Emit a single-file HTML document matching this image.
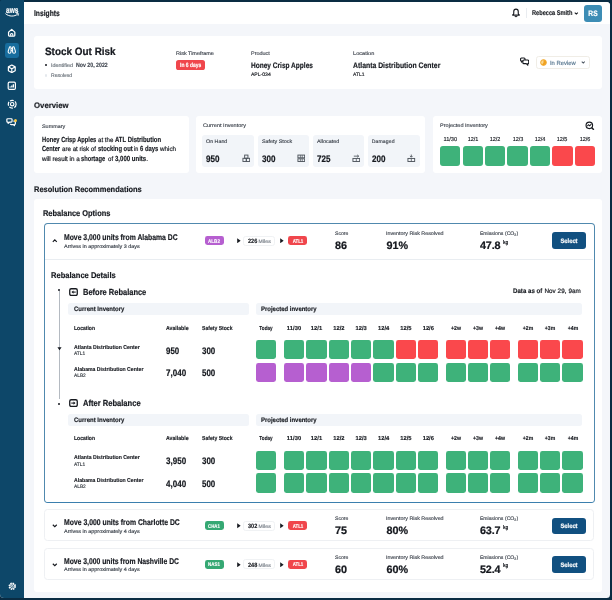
<!DOCTYPE html>
<html lang="en"><head><meta charset="utf-8"><title>Insights - Stock Out Risk</title>
<style>
html,body{margin:0;padding:0;}
body{width:612px;height:600px;overflow:hidden;background:#0a2c43;position:relative;font-family:"Liberation Sans",sans-serif;text-rendering:geometricPrecision;}
#app{position:absolute;left:0;top:0;width:612px;height:600px;transform:translateZ(0);will-change:transform;}
.b{position:absolute;display:block;}
.t{position:absolute;white-space:nowrap;}
b{font-weight:700;}
</style></head><body><div id="app">
<div class="b" style="left:0px;top:1.5px;width:609.60px;height:596.00px;background:#f4f6fa;border-radius:0px;border-radius:0 3.5px 3.5px 4px;"></div>
<div class="b" style="left:0px;top:0px;width:24.00px;height:597.50px;background:#0d4769;border-radius:0px;border-radius:1.5px 0 0 4px;"></div>
<div class="b" style="left:24px;top:1.5px;width:585.60px;height:22.60px;background:#fff;border-radius:0px;border-radius:0 3.5px 0 0;"></div>
<div class="t" style="left:5.8px;top:4.88px;font-size:8.8px;line-height:11.44px;font-weight:700;color:#fff;-webkit-text-stroke:0.194px #fff;transform:scaleX(0.7452);transform-origin:0 50%;">aws</div>
<svg class="b" style="left:5.2px;top:13.4px" width="14.4" height="4.4" viewBox="0 0 28.8 8.8" fill="none"><path d="M1.4 1.8 C8 7.6 19 7.6 25 2.6" stroke="#fff" stroke-width="2" stroke-linecap="round"/><path d="M23.4 0.9 L27.4 1.3 L26.2 5.2" stroke="#fff" stroke-width="1.5" stroke-linecap="round"/></svg>
<svg class="b" style="left:7.30px;top:27.90px;" width="9.4" height="9.4" viewBox="0 0 24 24" fill="none"><path d="M4 10.5 L12 3.5 L20 10.5 V18.5 Q20 20.5 18 20.5 H6 Q4 20.5 4 18.5 Z" stroke="#fff" stroke-width="3.2" stroke-linejoin="round"/><path d="M9.3 20 V15.5 Q12 12.5 14.7 15.5 V20" stroke="#fff" stroke-width="2.9"/></svg>
<div class="b" style="left:4.6px;top:42.6px;width:14.90px;height:15.40px;background:#176d9e;border-radius:2.4px;"></div>
<svg class="b" style="left:7.20px;top:45.40px;" width="9.6" height="9.6" viewBox="0 0 24 24" fill="none"><path d="M9.5 5 Q7 3.5 6 6 L3 15.5 Q2.5 20.5 6.5 20.5 Q10 20.5 10 17 V6 Z" stroke="#fff" stroke-width="2.7" stroke-linejoin="round"/><path d="M14.5 5 Q17 3.5 18 6 L21 15.5 Q21.5 20.5 17.5 20.5 Q14 20.5 14 17 V6 Z" stroke="#fff" stroke-width="2.7" stroke-linejoin="round"/><path d="M10 9 H14 M10 14 H14" stroke="#fff" stroke-width="2.4"/></svg>
<svg class="b" style="left:7.20px;top:63.80px;" width="9.6" height="9.6" viewBox="0 0 24 24" fill="none"><path d="M12 2.5 L20.5 7.2 V16.8 L12 21.5 L3.5 16.8 V7.2 Z" stroke="#fff" stroke-width="3.0" stroke-linejoin="round"/><path d="M3.8 7.4 L12 12 L20.2 7.4 M12 12 V21" stroke="#fff" stroke-width="2.7"/></svg>
<svg class="b" style="left:7.20px;top:81.20px;" width="9.6" height="9.6" viewBox="0 0 24 24" fill="none"><rect x="3" y="3" width="18" height="18" rx="3" stroke="#fff" stroke-width="3.0"/><path d="M8 16.5 V14 M12 16.5 V11 M16 16.5 V8" stroke="#fff" stroke-width="3.2"/></svg>
<svg class="b" style="left:6.80px;top:99.30px;" width="10.4" height="10.4" viewBox="0 0 24 24" fill="none"><circle cx="12" cy="12" r="9" stroke="#fff" stroke-width="2.8" stroke-dasharray="9 3"/><circle cx="12" cy="12" r="4" stroke="#fff" stroke-width="2.7"/></svg>
<svg class="b" style="left:6.40px;top:117.10px;" width="10.4" height="10.4" viewBox="0 0 24 24" fill="none"><path d="M4 4 H12 Q14 4 14 6 V10 Q14 12 12 12 H8 L5 14.5 V12 H4 Q2 12 2 10 V6 Q2 4 4 4 Z" stroke="#fff" stroke-width="2.8" stroke-linejoin="round"/><path d="M17 9.5 H19.5 Q21.5 9.5 21.5 11.5 V15.5 Q21.5 17.5 19.5 17.5 V20 L16.5 17.5 H12 Q10 17.5 10 15.5" stroke="#fff" stroke-width="2.8" stroke-linejoin="round"/></svg>
<div class="b" style="left:13.9px;top:119.1px;width:3.00px;height:3.00px;background:#f5c542;border-radius:2px;"></div>
<svg class="b" style="left:7.70px;top:581.90px;" width="8.6" height="8.6" viewBox="0 0 24 24" fill="none"><circle cx="12" cy="12" r="8.6" stroke="#fff" stroke-width="3.7" stroke-dasharray="4.2 2.55"/><circle cx="12" cy="12" r="6.5" stroke="#fff" stroke-width="2.4"/><circle cx="12" cy="12" r="2.6" stroke="#fff" stroke-width="2.4"/></svg>
<div class="t" style="left:34.3px;top:7.61px;font-size:8.3px;line-height:10.79px;font-weight:700;color:#16191f;-webkit-text-stroke:0.183px #16191f;transform:scaleX(0.8079);transform-origin:0 50%;">Insights</div>
<svg class="b" style="left:510.80px;top:7.50px;" width="10" height="10" viewBox="0 0 24 24" fill="none"><path d="M12 2.6 Q6.6 2.6 6.6 8.6 V13 Q6.6 15 4.2 16.4 V17.2 H19.8 V16.4 Q17.4 15 17.4 13 V8.6 Q17.4 2.6 12 2.6 Z" stroke="#16191f" stroke-width="2.7" stroke-linejoin="round"/><path d="M9.2 19.2 Q12 22.8 14.8 19.2" stroke="#16191f" stroke-width="2.5"/></svg>
<div class="b" style="left:526px;top:7.6px;width:0.60px;height:10.20px;background:#e9ecf0;border-radius:0px;"></div>
<div class="t" style="left:531.6px;top:10.15px;font-size:6.9px;line-height:8.97px;font-weight:700;color:#16191f;-webkit-text-stroke:0.152px #16191f;transform:scaleX(0.8177);transform-origin:0 50%;">Rebecca Smith</div>
<svg class="b" style="left:574.40px;top:11.00px;" width="4.6" height="4.6" viewBox="0 0 24 24" fill="none"><path d="M4 8 L12 16 L20 8" stroke="#16191f" stroke-width="5.4"/></svg>
<div class="b" style="left:584.4px;top:4.6px;width:17.20px;height:17.10px;background:#3d8db5;border-radius:3px;"></div>
<div class="t" style="left:592.8px;top:8.92px;font-size:7.8px;line-height:10.14px;font-weight:700;color:#fff;-webkit-text-stroke:0.172px #fff;transform:translateX(-50%) scaleX(0.8576);transform-origin:50% 50%;">RS</div>
<div class="b" style="left:34.4px;top:36.3px;width:567.20px;height:52.50px;background:#fff;border-radius:3px;"></div>
<div class="t" style="left:44.8px;top:45.67px;font-size:10.7px;line-height:13.91px;font-weight:700;color:#16191f;-webkit-text-stroke:0.235px #16191f;transform:scaleX(0.9286);transform-origin:0 50%;">Stock Out Risk</div>
<div class="b" style="left:44.9px;top:63.5px;width:2.20px;height:2.20px;background:#16191f;border-radius:1.1px;"></div>
<div class="t" style="left:50.8px;top:62.96px;font-size:5.2px;line-height:6.76px;font-weight:400;color:#687078;-webkit-text-stroke:0.156px #687078;transform:scaleX(1.0445);transform-origin:0 50%;">Identified</div>
<div class="t" style="left:76.2px;top:61.95px;font-size:6.2px;line-height:8.06px;font-weight:700;color:#414750;-webkit-text-stroke:0.136px #414750;transform:scaleX(0.8453);transform-origin:0 50%;">Nov 20, 2022</div>
<div class="b" style="left:44.9px;top:74.4px;width:2.20px;height:2.20px;background:#e4e8ed;border-radius:1.1px;"></div>
<div class="t" style="left:50.8px;top:73.48px;font-size:5.2px;line-height:6.76px;font-weight:400;color:#687078;-webkit-text-stroke:0.156px #687078;transform:scaleX(0.9704);transform-origin:0 50%;">Resolved</div>
<div class="t" style="left:176.2px;top:51.08px;font-size:5.2px;line-height:6.76px;font-weight:400;color:#414750;-webkit-text-stroke:0.156px #414750;transform:scaleX(1.0519);transform-origin:0 50%;">Risk Timeframe</div>
<div class="b" style="left:176.2px;top:60.4px;width:28.50px;height:9.20px;background:#f0464c;border-radius:2.6px;"></div>
<div class="t" style="left:179.8px;top:62.39px;font-size:6.2px;line-height:8.06px;font-weight:700;color:#fff;-webkit-text-stroke:0.136px #fff;transform:scaleX(0.8005);transform-origin:0 50%;">In 6 days</div>
<div class="t" style="left:250.9px;top:51.08px;font-size:5.2px;line-height:6.76px;font-weight:400;color:#414750;-webkit-text-stroke:0.156px #414750;transform:scaleX(1.0564);transform-origin:0 50%;">Product</div>
<div class="t" style="left:250.9px;top:61.22px;font-size:8.0px;line-height:10.4px;font-weight:700;color:#16191f;-webkit-text-stroke:0.176px #16191f;transform:scaleX(0.8175);transform-origin:0 50%;">Honey Crisp Apples</div>
<div class="t" style="left:250.9px;top:71.52px;font-size:5.1px;line-height:6.63px;font-weight:400;color:#16191f;letter-spacing:0.012px;-webkit-text-stroke:0.153px #16191f;">APL-034</div>
<div class="t" style="left:352.8px;top:51.08px;font-size:5.2px;line-height:6.76px;font-weight:400;color:#414750;-webkit-text-stroke:0.156px #414750;transform:scaleX(1.0854);transform-origin:0 50%;">Location</div>
<div class="t" style="left:352.8px;top:61.22px;font-size:8.0px;line-height:10.4px;font-weight:700;color:#16191f;-webkit-text-stroke:0.176px #16191f;transform:scaleX(0.8577);transform-origin:0 50%;">Atlanta Distribution Center</div>
<div class="t" style="left:352.8px;top:71.52px;font-size:5.1px;line-height:6.63px;font-weight:400;color:#16191f;-webkit-text-stroke:0.153px #16191f;transform:scaleX(0.9748);transform-origin:0 50%;">ATL1</div>
<svg class="b" style="left:519.60px;top:57.30px;" width="9.6" height="9.6" viewBox="0 0 24 24" fill="none"><path d="M3.6 2.6 H10.2 Q12.6 2.6 12.6 5 V7.6 Q12.6 10 10.2 10 H6.8 L4 12.6 V10 H3.6 Q1.4 10 1.4 7.6 V5 Q1.4 2.6 3.6 2.6 Z" stroke="#16191f" stroke-width="2.8" stroke-linejoin="round" fill="#fff"/><path d="M9.6 7.6 H19.2 Q21.8 7.6 21.8 10 V14.2 Q21.8 16.6 19.4 16.6 V20.6 L15.6 16.6 H9.6 Q7.2 16.6 7.2 14.2 V10 Q7.2 7.6 9.6 7.6 Z" stroke="#16191f" stroke-width="2.8" stroke-linejoin="round" fill="#fff"/></svg>
<div class="b" style="left:536.2px;top:55.9px;width:53.70px;height:13.40px;background:#fff;border-radius:2.6px;border:0.7px solid #f0ede6;box-sizing:border-box;"></div>
<svg class="b" style="left:539.60px;top:59.00px;" width="7.0" height="7.0" viewBox="0 0 24 24" fill="none"><circle cx="12" cy="12" r="9.8" fill="#fbd88f" stroke="#f0a11f" stroke-width="3.4"/><path d="M12 12 V3 A9 9 0 0 1 21 12 A9 9 0 0 1 7 19.5 Z" fill="#f0a11f"/></svg>
<div class="t" style="left:550.1px;top:60.65px;font-size:6.0px;line-height:7.8px;font-weight:400;color:#5d7b93;-webkit-text-stroke:0.18px #5d7b93;transform:scaleX(0.9718);transform-origin:0 50%;">In Review</div>
<svg class="b" style="left:580.90px;top:60.40px;" width="4.6" height="4.6" viewBox="0 0 24 24" fill="none"><path d="M4 8 L12 16 L20 8" stroke="#4b5560" stroke-width="5.4"/></svg>
<div class="t" style="left:34.1px;top:100.66px;font-size:8.0px;line-height:10.4px;font-weight:700;color:#16191f;-webkit-text-stroke:0.176px #16191f;transform:scaleX(0.9725);transform-origin:0 50%;">Overview</div>
<div class="b" style="left:34.4px;top:115.5px;width:154.60px;height:57.30px;background:#fff;border-radius:3px;"></div>
<div class="t" style="left:41.5px;top:123.92px;font-size:5.1px;line-height:6.63px;font-weight:400;color:#414750;-webkit-text-stroke:0.153px #414750;transform:scaleX(1.0644);transform-origin:0 50%;">Summary</div>
<div class="t" style="left:41.5px;top:134.54px;font-size:7.4px;line-height:9.62px;font-weight:700;color:#16191f;-webkit-text-stroke:0.163px #16191f;transform:scaleX(0.7762);transform-origin:0 50%;">Honey Crisp Apples</div>
<div class="t" style="left:97.9px;top:137.45px;font-size:6.5px;line-height:8.45px;font-weight:400;color:#16191f;-webkit-text-stroke:0.195px #16191f;transform:scaleX(0.9406);transform-origin:0 50%;">at the</div>
<div class="t" style="left:115.2px;top:134.54px;font-size:7.4px;line-height:9.62px;font-weight:700;color:#16191f;-webkit-text-stroke:0.163px #16191f;transform:scaleX(0.8059);transform-origin:0 50%;">ATL Distribution</div>
<div class="t" style="left:41.5px;top:143.54px;font-size:7.4px;line-height:9.62px;font-weight:700;color:#16191f;-webkit-text-stroke:0.163px #16191f;transform:scaleX(0.7728);transform-origin:0 50%;">Center</div>
<div class="t" style="left:61.5px;top:146.45px;font-size:6.5px;line-height:8.45px;font-weight:400;color:#16191f;-webkit-text-stroke:0.195px #16191f;transform:scaleX(0.9506);transform-origin:0 50%;">are at risk of</div>
<div class="t" style="left:97.5px;top:143.54px;font-size:7.4px;line-height:9.62px;font-weight:700;color:#16191f;-webkit-text-stroke:0.163px #16191f;transform:scaleX(0.7898);transform-origin:0 50%;">stocking out</div>
<div class="t" style="left:134.1px;top:146.45px;font-size:6.5px;line-height:8.45px;font-weight:400;color:#16191f;-webkit-text-stroke:0.195px #16191f;transform:scaleX(0.8494);transform-origin:0 50%;">in</div>
<div class="t" style="left:140px;top:143.54px;font-size:7.4px;line-height:9.62px;font-weight:700;color:#16191f;-webkit-text-stroke:0.163px #16191f;transform:scaleX(0.7951);transform-origin:0 50%;">6 days</div>
<div class="t" style="left:160px;top:146.45px;font-size:6.5px;line-height:8.45px;font-weight:400;color:#16191f;-webkit-text-stroke:0.195px #16191f;transform:scaleX(0.9624);transform-origin:0 50%;">which</div>
<div class="t" style="left:41.5px;top:156.45px;font-size:6.5px;line-height:8.45px;font-weight:400;color:#16191f;-webkit-text-stroke:0.195px #16191f;transform:scaleX(0.9663);transform-origin:0 50%;">will result in a</div>
<div class="t" style="left:81.1px;top:153.54px;font-size:7.4px;line-height:9.62px;font-weight:700;color:#16191f;-webkit-text-stroke:0.163px #16191f;transform:scaleX(0.772);transform-origin:0 50%;">shortage</div>
<div class="t" style="left:107.6px;top:156.45px;font-size:6.5px;line-height:8.45px;font-weight:400;color:#16191f;-webkit-text-stroke:0.195px #16191f;transform:scaleX(0.9406);transform-origin:0 50%;">of</div>
<div class="t" style="left:115px;top:153.54px;font-size:7.4px;line-height:9.62px;font-weight:700;color:#16191f;-webkit-text-stroke:0.163px #16191f;transform:scaleX(0.8167);transform-origin:0 50%;">3,000 units</div>
<div class="t" style="left:146.2px;top:156.45px;font-size:6.5px;line-height:8.45px;font-weight:400;color:#16191f;-webkit-text-stroke:0.195px #16191f;">.</div>
<div class="b" style="left:195.8px;top:115.5px;width:229.60px;height:57.30px;background:#fff;border-radius:3px;"></div>
<div class="t" style="left:203px;top:123.11px;font-size:5.1px;line-height:6.63px;font-weight:400;color:#414750;-webkit-text-stroke:0.153px #414750;transform:scaleX(1.0925);transform-origin:0 50%;">Current Inventory</div>
<div class="b" style="left:202.4px;top:134.6px;width:51.70px;height:32.30px;background:#f2f5f9;border-radius:3px;"></div>
<div class="t" style="left:206.20000000000002px;top:138.52px;font-size:5.1px;line-height:6.63px;font-weight:400;color:#414750;-webkit-text-stroke:0.153px #414750;transform:scaleX(1.0446);transform-origin:0 50%;">On Hand</div>
<div class="t" style="left:206.20000000000002px;top:153.26px;font-size:9.4px;line-height:12.22px;font-weight:700;color:#16191f;-webkit-text-stroke:0.207px #16191f;transform:scaleX(0.8623);transform-origin:0 50%;">950</div>
<svg class="b" style="left:241.50px;top:153.80px;" width="8.6" height="8.6" viewBox="0 0 24 24" fill="none"><rect x="7.4" y="3" width="9.2" height="9" stroke="#4d545c" stroke-width="2.6"/><rect x="2.6" y="12" width="9.4" height="9" stroke="#4d545c" stroke-width="2.6"/><rect x="12" y="12" width="9.4" height="9" stroke="#4d545c" stroke-width="2.6"/></svg>
<div class="b" style="left:257.8px;top:134.6px;width:51.40px;height:32.30px;background:#f2f5f9;border-radius:3px;"></div>
<div class="t" style="left:261.6px;top:138.52px;font-size:5.1px;line-height:6.63px;font-weight:400;color:#414750;-webkit-text-stroke:0.153px #414750;transform:scaleX(1.0556);transform-origin:0 50%;">Safety Stock</div>
<div class="t" style="left:261.6px;top:153.26px;font-size:9.4px;line-height:12.22px;font-weight:700;color:#16191f;-webkit-text-stroke:0.207px #16191f;transform:scaleX(0.8623);transform-origin:0 50%;">300</div>
<svg class="b" style="left:296.60px;top:153.80px;" width="8.6" height="8.6" viewBox="0 0 24 24" fill="none"><rect x="2.6" y="3" width="18.8" height="7.6" stroke="#4d545c" stroke-width="2.6"/><rect x="2.6" y="13.4" width="18.8" height="7.6" stroke="#4d545c" stroke-width="2.6"/><path d="M9.4 3 V10.6 M14.6 3 V10.6 M9.4 13.4 V21 M14.6 13.4 V21" stroke="#4d545c" stroke-width="2"/></svg>
<div class="b" style="left:313px;top:134.6px;width:51.40px;height:32.30px;background:#f2f5f9;border-radius:3px;"></div>
<div class="t" style="left:316.8px;top:138.52px;font-size:5.1px;line-height:6.63px;font-weight:400;color:#414750;-webkit-text-stroke:0.153px #414750;transform:scaleX(1.0635);transform-origin:0 50%;">Allocated</div>
<div class="t" style="left:316.8px;top:153.26px;font-size:9.4px;line-height:12.22px;font-weight:700;color:#16191f;-webkit-text-stroke:0.207px #16191f;transform:scaleX(0.8623);transform-origin:0 50%;">725</div>
<svg class="b" style="left:351.80px;top:153.80px;" width="8.6" height="8.6" viewBox="0 0 24 24" fill="none"><rect x="2.6" y="12.4" width="18.8" height="8.6" stroke="#4d545c" stroke-width="2.6"/><path d="M5 6 H18.5 M14.6 2.6 L18.6 6 L14.6 9.4" stroke="#4d545c" stroke-width="2.4"/><path d="M12 12.4 V21" stroke="#4d545c" stroke-width="2.2"/></svg>
<div class="b" style="left:368px;top:134.6px;width:51.60px;height:32.30px;background:#f2f5f9;border-radius:3px;"></div>
<div class="t" style="left:371.8px;top:138.52px;font-size:5.1px;line-height:6.63px;font-weight:400;color:#414750;letter-spacing:0.101px;-webkit-text-stroke:0.153px #414750;">Damaged</div>
<div class="t" style="left:371.8px;top:153.26px;font-size:9.4px;line-height:12.22px;font-weight:700;color:#16191f;-webkit-text-stroke:0.207px #16191f;transform:scaleX(0.8623);transform-origin:0 50%;">200</div>
<svg class="b" style="left:407.00px;top:153.80px;" width="8.6" height="8.6" viewBox="0 0 24 24" fill="none"><rect x="2.6" y="12.4" width="18.8" height="8.6" stroke="#4d545c" stroke-width="2.6"/><path d="M12 1.6 V8.6 M8.4 5.4 L12 9 L15.6 5.4" stroke="#4d545c" stroke-width="2.4"/><path d="M12 12.4 V21" stroke="#4d545c" stroke-width="2.2"/></svg>
<div class="b" style="left:433.1px;top:115.5px;width:168.50px;height:57.30px;background:#fff;border-radius:3px;"></div>
<div class="t" style="left:440.1px;top:123.32px;font-size:5.1px;line-height:6.63px;font-weight:400;color:#414750;-webkit-text-stroke:0.153px #414750;transform:scaleX(1.0913);transform-origin:0 50%;">Projected Inventory</div>
<svg class="b" style="left:585.10px;top:120.70px;" width="9.8" height="9.8" viewBox="0 0 24 24" fill="none"><circle cx="10.6" cy="10.6" r="8" stroke="#16191f" stroke-width="2.8"/><path d="M16.6 16.6 L21.6 21.6" stroke="#16191f" stroke-width="3.4"/><path d="M5.6 12.4 L8.8 9.2 L11.4 11.8 L15.6 7.6" stroke="#16191f" stroke-width="2.5"/></svg>
<div class="b" style="left:440.1px;top:146.1px;width:20.40px;height:20.20px;background:#3eb27a;border-radius:2.9px;"></div>
<div class="t" style="left:450.3px;top:136.67px;font-size:5.7px;line-height:7.41px;font-weight:400;color:#16191f;letter-spacing:-0.028px;transform:translateX(-50%) scaleX(1);transform-origin:50% 50%;-webkit-text-stroke:0.13px #16191f;">11/30</div>
<div class="b" style="left:462.53px;top:146.1px;width:20.40px;height:20.20px;background:#3eb27a;border-radius:2.9px;"></div>
<div class="t" style="left:472.73px;top:136.67px;font-size:5.7px;line-height:7.41px;font-weight:400;color:#16191f;transform:translateX(-50%) scaleX(0.9659);transform-origin:50% 50%;-webkit-text-stroke:0.13px #16191f;">12/1</div>
<div class="b" style="left:484.96px;top:146.1px;width:20.40px;height:20.20px;background:#3eb27a;border-radius:2.9px;"></div>
<div class="t" style="left:495.16px;top:136.67px;font-size:5.7px;line-height:7.41px;font-weight:400;color:#16191f;transform:translateX(-50%) scaleX(0.9659);transform-origin:50% 50%;-webkit-text-stroke:0.13px #16191f;">12/2</div>
<div class="b" style="left:507.39px;top:146.1px;width:20.40px;height:20.20px;background:#3eb27a;border-radius:2.9px;"></div>
<div class="t" style="left:517.59px;top:136.67px;font-size:5.7px;line-height:7.41px;font-weight:400;color:#16191f;transform:translateX(-50%) scaleX(0.9659);transform-origin:50% 50%;-webkit-text-stroke:0.13px #16191f;">12/3</div>
<div class="b" style="left:529.82px;top:146.1px;width:20.40px;height:20.20px;background:#3eb27a;border-radius:2.9px;"></div>
<div class="t" style="left:540.0200000000001px;top:136.67px;font-size:5.7px;line-height:7.41px;font-weight:400;color:#16191f;transform:translateX(-50%) scaleX(0.9659);transform-origin:50% 50%;-webkit-text-stroke:0.13px #16191f;">12/4</div>
<div class="b" style="left:552.25px;top:146.1px;width:20.40px;height:20.20px;background:#fa484c;border-radius:2.9px;"></div>
<div class="t" style="left:562.45px;top:136.67px;font-size:5.7px;line-height:7.41px;font-weight:400;color:#16191f;transform:translateX(-50%) scaleX(0.9659);transform-origin:50% 50%;-webkit-text-stroke:0.13px #16191f;">12/5</div>
<div class="b" style="left:574.68px;top:146.1px;width:20.40px;height:20.20px;background:#fa484c;border-radius:2.9px;"></div>
<div class="t" style="left:584.8800000000001px;top:136.67px;font-size:5.7px;line-height:7.41px;font-weight:400;color:#16191f;transform:translateX(-50%) scaleX(0.9659);transform-origin:50% 50%;-webkit-text-stroke:0.13px #16191f;">12/6</div>
<div class="t" style="left:33.9px;top:184.64px;font-size:8.1px;line-height:10.53px;font-weight:700;color:#16191f;-webkit-text-stroke:0.178px #16191f;transform:scaleX(0.9254);transform-origin:0 50%;">Resolution Recommendations</div>
<div class="b" style="left:34.3px;top:199.3px;width:567.30px;height:392.30px;background:#fff;border-radius:3px;"></div>
<div class="t" style="left:43.1px;top:207.54px;font-size:8.4px;line-height:10.92px;font-weight:700;color:#16191f;-webkit-text-stroke:0.185px #16191f;transform:scaleX(0.8885);transform-origin:0 50%;">Rebalance Options</div>
<div class="b" style="left:44.2px;top:223.3px;width:550.40px;height:280.00px;background:#fff;border-radius:3.8px;border:1.1px solid #5089ae;border-bottom:1.5px solid #3b7fae;box-sizing:border-box;"></div>
<svg class="b" style="left:52.40px;top:238.20px;" width="5.6" height="5.6" viewBox="0 0 24 24" fill="none"><path d="M3.5 16.5 L12 8 L20.5 16.5" stroke="#16191f" stroke-width="4.8"/></svg>
<div class="t" style="left:63.8px;top:231.91px;font-size:8.3px;line-height:10.79px;font-weight:700;color:#16191f;-webkit-text-stroke:0.183px #16191f;transform:scaleX(0.8238);transform-origin:0 50%;">Move 3,000 units from Alabama DC</div>
<div class="t" style="left:64px;top:243.52px;font-size:5.1px;line-height:6.63px;font-weight:400;color:#3b424b;-webkit-text-stroke:0.153px #3b424b;transform:scaleX(1.0709);transform-origin:0 50%;">Arrives in approximately 3 days</div>
<div class="b" style="left:204.7px;top:236.1px;width:19.40px;height:9.20px;background:#b65fd0;border-radius:2.4px;"></div>
<div class="t" style="left:214.4px;top:239.02px;font-size:5.4px;line-height:7.02px;font-weight:700;color:#fff;-webkit-text-stroke:0.119px #fff;transform:translateX(-50%) scaleX(0.8382);transform-origin:50% 50%;">ALB2</div>
<svg class="b" style="left:235.50px;top:237.90px;" width="5.6" height="5.6" viewBox="0 0 24 24" fill="none"><path d="M5 1.5 L20 12 L5 22.5 Z" fill="#16191f"/></svg>
<div class="b" style="left:243.4px;top:235.5px;width:31.40px;height:10.40px;background:#fff;border-radius:2.6px;border:0.7px solid #f0f2f4;box-sizing:border-box;"></div>
<div class="t" style="left:247.8px;top:237.75px;font-size:6.2px;line-height:8.06px;font-weight:700;color:#16191f;-webkit-text-stroke:0.136px #16191f;transform:scaleX(0.9005);transform-origin:0 50%;">226</div>
<div class="t" style="left:258.6px;top:238.86px;font-size:5.1px;line-height:6.63px;font-weight:400;color:#737b84;letter-spacing:0.052px;-webkit-text-stroke:0.153px #737b84;">Miles</div>
<svg class="b" style="left:278.50px;top:237.90px;" width="5.6" height="5.6" viewBox="0 0 24 24" fill="none"><path d="M5 1.5 L20 12 L5 22.5 Z" fill="#16191f"/></svg>
<div class="b" style="left:288px;top:236.1px;width:19.30px;height:9.20px;background:#f0464c;border-radius:2.4px;"></div>
<div class="t" style="left:297.5px;top:239.02px;font-size:5.4px;line-height:7.02px;font-weight:700;color:#fff;-webkit-text-stroke:0.119px #fff;transform:translateX(-50%) scaleX(0.8105);transform-origin:50% 50%;">ATL1</div>
<div class="t" style="left:335px;top:230.72px;font-size:5.1px;line-height:6.63px;font-weight:400;color:#414750;letter-spacing:-0.003px;-webkit-text-stroke:0.153px #414750;">Score</div>
<div class="t" style="left:335px;top:239.45px;font-size:10.8px;line-height:14.04px;font-weight:700;color:#16191f;letter-spacing:-0.016px;-webkit-text-stroke:0.238px #16191f;">86</div>
<div class="t" style="left:386.4px;top:230.72px;font-size:5.1px;line-height:6.63px;font-weight:400;color:#414750;-webkit-text-stroke:0.153px #414750;transform:scaleX(1.0485);transform-origin:0 50%;">Inventory Risk Resolved</div>
<div class="t" style="left:386.4px;top:239.45px;font-size:10.8px;line-height:14.04px;font-weight:700;color:#16191f;letter-spacing:0.088px;-webkit-text-stroke:0.238px #16191f;">91%</div>
<div class="t" style="left:479.9px;top:230.72px;font-size:5.1px;line-height:6.63px;font-weight:400;color:#414750;letter-spacing:0.038px;-webkit-text-stroke:0.153px #414750;">Emissions (CO<span style="font-size:3.6px;vertical-align:-0.8px">2</span>)</div>
<div class="t" style="left:479.9px;top:239.45px;font-size:10.8px;line-height:14.04px;font-weight:700;color:#16191f;letter-spacing:-0.105px;-webkit-text-stroke:0.238px #16191f;">47.8</div>
<div class="t" style="left:503.4px;top:239.76px;font-size:5.4px;line-height:7.02px;font-weight:700;color:#16191f;-webkit-text-stroke:0.119px #16191f;transform:scaleX(0.8417);transform-origin:0 50%;">kg</div>
<div class="b" style="left:552.1px;top:232.3px;width:33.90px;height:16.80px;background:#115080;border-radius:3px;"></div>
<div class="t" style="left:568.6px;top:237.53px;font-size:6.5px;line-height:8.45px;font-weight:700;color:#fff;-webkit-text-stroke:0.143px #fff;transform:translateX(-50%) scaleX(0.8927);transform-origin:50% 50%;">Select</div>
<div class="b" style="left:45.2px;top:259.4px;width:548.20px;height:0.70px;background:#e9edf1;border-radius:0px;"></div>
<div class="t" style="left:50.5px;top:269.50px;font-size:8.3px;line-height:10.79px;font-weight:700;color:#16191f;-webkit-text-stroke:0.183px #16191f;transform:scaleX(0.9109);transform-origin:0 50%;">Rebalance Details</div>
<div class="t" style="left:512.6px;top:287.85px;font-size:6.7px;line-height:8.71px;font-weight:700;color:#16191f;-webkit-text-stroke:0.147px #16191f;transform:scaleX(0.9165);transform-origin:0 50%;">Data as of</div>
<div class="t" style="left:544.4px;top:288.25px;font-size:6.3px;line-height:8.19px;font-weight:400;color:#16191f;letter-spacing:0.07px;-webkit-text-stroke:0.189px #16191f;">Nov 29, 9am</div>
<div class="b" style="left:58.95px;top:291px;width:0.55px;height:107.50px;background:#b4bac1;border-radius:0px;"></div>
<div class="b" style="left:58.2px;top:289.2px;width:2.00px;height:2.00px;background:#16191f;border-radius:1px;"></div>
<svg class="b" style="left:56.70px;top:345.70px;" width="5.0" height="5.0" viewBox="0 0 24 24" fill="none"><path d="M2 6 L22 6 L12 20 Z" fill="#16191f"/></svg>
<div class="b" style="left:58.2px;top:402.9px;width:2.00px;height:2.00px;background:#16191f;border-radius:1px;"></div>
<svg class="b" style="left:68.9px;top:287.95px" width="9" height="8.2" viewBox="0 0 22 20" fill="none"><rect x="1.8" y="1.8" width="18.4" height="16.4" rx="3.6" stroke="#16191f" stroke-width="3.2"/><path d="M16.5 10 H9" stroke="#16191f" stroke-width="2.6"/><path d="M11 5.8 L6 10 L11 14.2 Z" fill="#16191f"/></svg>
<div class="t" style="left:83.4px;top:287.18px;font-size:8.8px;line-height:11.44px;font-weight:700;color:#16191f;-webkit-text-stroke:0.194px #16191f;transform:scaleX(0.8516);transform-origin:0 50%;">Before Rebalance</div>
<div class="b" style="left:68.1px;top:303.4px;width:181.40px;height:11.50px;background:#f2f5f9;border-radius:2.5px;"></div>
<div class="t" style="left:73.5px;top:306.27px;font-size:6.6px;line-height:8.58px;font-weight:700;color:#16191f;-webkit-text-stroke:0.145px #16191f;transform:scaleX(0.9091);transform-origin:0 50%;">Current Inventory</div>
<div class="b" style="left:255.7px;top:303.4px;width:326.70px;height:11.50px;background:#f2f5f9;border-radius:2.5px;"></div>
<div class="t" style="left:260.7px;top:306.27px;font-size:6.6px;line-height:8.58px;font-weight:700;color:#16191f;-webkit-text-stroke:0.145px #16191f;transform:scaleX(0.9031);transform-origin:0 50%;">Projected inventory</div>
<div class="t" style="left:73.5px;top:325.51px;font-size:5.8px;line-height:7.54px;font-weight:700;color:#16191f;-webkit-text-stroke:0.128px #16191f;transform:scaleX(0.8693);transform-origin:0 50%;">Location</div>
<div class="t" style="left:165.6px;top:325.51px;font-size:5.8px;line-height:7.54px;font-weight:700;color:#16191f;-webkit-text-stroke:0.128px #16191f;transform:scaleX(0.895);transform-origin:0 50%;">Available</div>
<div class="t" style="left:201.9px;top:325.51px;font-size:5.8px;line-height:7.54px;font-weight:700;color:#16191f;-webkit-text-stroke:0.128px #16191f;transform:scaleX(0.8765);transform-origin:0 50%;">Safety Stock</div>
<div class="t" style="left:265.8px;top:325.51px;font-size:5.8px;line-height:7.54px;font-weight:700;color:#16191f;-webkit-text-stroke:0.128px #16191f;transform:translateX(-50%) scaleX(0.7992);transform-origin:50% 50%;">Today</div>
<div class="t" style="left:294.1px;top:325.51px;font-size:5.8px;line-height:7.54px;font-weight:700;color:#16191f;letter-spacing:0.053px;-webkit-text-stroke:0.128px #16191f;transform:translateX(-50%) scaleX(1);transform-origin:50% 50%;">11/30</div>
<div class="t" style="left:316.47px;top:325.51px;font-size:5.8px;line-height:7.54px;font-weight:700;color:#16191f;letter-spacing:0.001px;-webkit-text-stroke:0.128px #16191f;transform:translateX(-50%) scaleX(1);transform-origin:50% 50%;">12/1</div>
<div class="t" style="left:338.84000000000003px;top:325.51px;font-size:5.8px;line-height:7.54px;font-weight:700;color:#16191f;letter-spacing:0.001px;-webkit-text-stroke:0.128px #16191f;transform:translateX(-50%) scaleX(1);transform-origin:50% 50%;">12/2</div>
<div class="t" style="left:361.21000000000004px;top:325.51px;font-size:5.8px;line-height:7.54px;font-weight:700;color:#16191f;letter-spacing:0.001px;-webkit-text-stroke:0.128px #16191f;transform:translateX(-50%) scaleX(1);transform-origin:50% 50%;">12/3</div>
<div class="t" style="left:383.58000000000004px;top:325.51px;font-size:5.8px;line-height:7.54px;font-weight:700;color:#16191f;letter-spacing:0.001px;-webkit-text-stroke:0.128px #16191f;transform:translateX(-50%) scaleX(1);transform-origin:50% 50%;">12/4</div>
<div class="t" style="left:405.95000000000005px;top:325.51px;font-size:5.8px;line-height:7.54px;font-weight:700;color:#16191f;letter-spacing:0.001px;-webkit-text-stroke:0.128px #16191f;transform:translateX(-50%) scaleX(1);transform-origin:50% 50%;">12/5</div>
<div class="t" style="left:428.32000000000005px;top:325.51px;font-size:5.8px;line-height:7.54px;font-weight:700;color:#16191f;letter-spacing:0.001px;-webkit-text-stroke:0.128px #16191f;transform:translateX(-50%) scaleX(1);transform-origin:50% 50%;">12/6</div>
<div class="t" style="left:455.6px;top:325.51px;font-size:5.8px;line-height:7.54px;font-weight:700;color:#16191f;-webkit-text-stroke:0.128px #16191f;transform:translateX(-50%) scaleX(0.8989);transform-origin:50% 50%;">+2w</div>
<div class="t" style="left:478.0px;top:325.51px;font-size:5.8px;line-height:7.54px;font-weight:700;color:#16191f;-webkit-text-stroke:0.128px #16191f;transform:translateX(-50%) scaleX(0.8989);transform-origin:50% 50%;">+3w</div>
<div class="t" style="left:500.40000000000003px;top:325.51px;font-size:5.8px;line-height:7.54px;font-weight:700;color:#16191f;-webkit-text-stroke:0.128px #16191f;transform:translateX(-50%) scaleX(0.8989);transform-origin:50% 50%;">+4w</div>
<div class="t" style="left:527.7px;top:325.51px;font-size:5.8px;line-height:7.54px;font-weight:700;color:#16191f;-webkit-text-stroke:0.128px #16191f;transform:translateX(-50%) scaleX(0.8839);transform-origin:50% 50%;">+2m</div>
<div class="t" style="left:550.1px;top:325.51px;font-size:5.8px;line-height:7.54px;font-weight:700;color:#16191f;-webkit-text-stroke:0.128px #16191f;transform:translateX(-50%) scaleX(0.8839);transform-origin:50% 50%;">+3m</div>
<div class="t" style="left:572.5px;top:325.51px;font-size:5.8px;line-height:7.54px;font-weight:700;color:#16191f;-webkit-text-stroke:0.128px #16191f;transform:translateX(-50%) scaleX(0.8839);transform-origin:50% 50%;">+4m</div>
<div class="t" style="left:73.6px;top:344.86px;font-size:5.6px;line-height:7.28px;font-weight:700;color:#16191f;-webkit-text-stroke:0.123px #16191f;transform:scaleX(0.9231);transform-origin:0 50%;">Atlanta Distribution Center</div>
<div class="t" style="left:73.6px;top:350.72px;font-size:5.1px;line-height:6.63px;font-weight:400;color:#30363d;-webkit-text-stroke:0.153px #30363d;transform:scaleX(0.9494);transform-origin:0 50%;">ATL1</div>
<div class="t" style="left:165.8px;top:345.06px;font-size:9.4px;line-height:12.22px;font-weight:700;color:#16191f;-webkit-text-stroke:0.207px #16191f;transform:scaleX(0.8431);transform-origin:0 50%;">950</div>
<div class="t" style="left:202px;top:345.06px;font-size:9.4px;line-height:12.22px;font-weight:700;color:#16191f;-webkit-text-stroke:0.207px #16191f;transform:scaleX(0.8495);transform-origin:0 50%;">300</div>
<div class="b" style="left:255.7px;top:339.9px;width:20.15px;height:19.60px;background:#3eb27a;border-radius:2.4px;"></div>
<div class="b" style="left:284.0px;top:339.9px;width:20.15px;height:19.60px;background:#3eb27a;border-radius:2.4px;"></div>
<div class="b" style="left:306.37px;top:339.9px;width:20.15px;height:19.60px;background:#3eb27a;border-radius:2.4px;"></div>
<div class="b" style="left:328.74px;top:339.9px;width:20.15px;height:19.60px;background:#3eb27a;border-radius:2.4px;"></div>
<div class="b" style="left:351.11px;top:339.9px;width:20.15px;height:19.60px;background:#3eb27a;border-radius:2.4px;"></div>
<div class="b" style="left:373.48px;top:339.9px;width:20.15px;height:19.60px;background:#3eb27a;border-radius:2.4px;"></div>
<div class="b" style="left:395.85px;top:339.9px;width:20.15px;height:19.60px;background:#fa484c;border-radius:2.4px;"></div>
<div class="b" style="left:418.22px;top:339.9px;width:20.15px;height:19.60px;background:#fa484c;border-radius:2.4px;"></div>
<div class="b" style="left:445.5px;top:339.9px;width:20.15px;height:19.60px;background:#fa484c;border-radius:2.4px;"></div>
<div class="b" style="left:467.9px;top:339.9px;width:20.15px;height:19.60px;background:#fa484c;border-radius:2.4px;"></div>
<div class="b" style="left:490.3px;top:339.9px;width:20.15px;height:19.60px;background:#fa484c;border-radius:2.4px;"></div>
<div class="b" style="left:517.6px;top:339.9px;width:20.15px;height:19.60px;background:#fa484c;border-radius:2.4px;"></div>
<div class="b" style="left:540.0px;top:339.9px;width:20.15px;height:19.60px;background:#fa484c;border-radius:2.4px;"></div>
<div class="b" style="left:562.4px;top:339.9px;width:20.15px;height:19.60px;background:#fa484c;border-radius:2.4px;"></div>
<div class="t" style="left:73.6px;top:367.16px;font-size:5.6px;line-height:7.28px;font-weight:700;color:#16191f;-webkit-text-stroke:0.123px #16191f;transform:scaleX(0.9188);transform-origin:0 50%;">Alabama Distribution Center</div>
<div class="t" style="left:73.6px;top:372.85px;font-size:5.1px;line-height:6.63px;font-weight:400;color:#30363d;-webkit-text-stroke:0.153px #30363d;transform:scaleX(0.9464);transform-origin:0 50%;">ALB2</div>
<div class="t" style="left:165.8px;top:366.69px;font-size:9.4px;line-height:12.22px;font-weight:700;color:#16191f;-webkit-text-stroke:0.207px #16191f;transform:scaleX(0.8565);transform-origin:0 50%;">7,040</div>
<div class="t" style="left:202px;top:366.69px;font-size:9.4px;line-height:12.22px;font-weight:700;color:#16191f;-webkit-text-stroke:0.207px #16191f;transform:scaleX(0.8495);transform-origin:0 50%;">500</div>
<div class="b" style="left:255.7px;top:362.69999999999993px;width:20.15px;height:19.60px;background:#b65fd0;border-radius:2.4px;"></div>
<div class="b" style="left:284.0px;top:362.69999999999993px;width:20.15px;height:19.60px;background:#b65fd0;border-radius:2.4px;"></div>
<div class="b" style="left:306.37px;top:362.69999999999993px;width:20.15px;height:19.60px;background:#b65fd0;border-radius:2.4px;"></div>
<div class="b" style="left:328.74px;top:362.69999999999993px;width:20.15px;height:19.60px;background:#b65fd0;border-radius:2.4px;"></div>
<div class="b" style="left:351.11px;top:362.69999999999993px;width:20.15px;height:19.60px;background:#b65fd0;border-radius:2.4px;"></div>
<div class="b" style="left:373.48px;top:362.69999999999993px;width:20.15px;height:19.60px;background:#3eb27a;border-radius:2.4px;"></div>
<div class="b" style="left:395.85px;top:362.69999999999993px;width:20.15px;height:19.60px;background:#3eb27a;border-radius:2.4px;"></div>
<div class="b" style="left:418.22px;top:362.69999999999993px;width:20.15px;height:19.60px;background:#3eb27a;border-radius:2.4px;"></div>
<div class="b" style="left:445.5px;top:362.69999999999993px;width:20.15px;height:19.60px;background:#3eb27a;border-radius:2.4px;"></div>
<div class="b" style="left:467.9px;top:362.69999999999993px;width:20.15px;height:19.60px;background:#3eb27a;border-radius:2.4px;"></div>
<div class="b" style="left:490.3px;top:362.69999999999993px;width:20.15px;height:19.60px;background:#3eb27a;border-radius:2.4px;"></div>
<div class="b" style="left:517.6px;top:362.69999999999993px;width:20.15px;height:19.60px;background:#3eb27a;border-radius:2.4px;"></div>
<div class="b" style="left:540.0px;top:362.69999999999993px;width:20.15px;height:19.60px;background:#3eb27a;border-radius:2.4px;"></div>
<div class="b" style="left:562.4px;top:362.69999999999993px;width:20.15px;height:19.60px;background:#3eb27a;border-radius:2.4px;"></div>
<svg class="b" style="left:68.9px;top:398.65px" width="9" height="8.2" viewBox="0 0 22 20" fill="none"><rect x="1.8" y="1.8" width="18.4" height="16.4" rx="3.6" stroke="#16191f" stroke-width="3.2"/><path d="M5.5 10 H13" stroke="#16191f" stroke-width="2.6"/><path d="M11 5.8 L16 10 L11 14.2 Z" fill="#16191f"/></svg>
<div class="t" style="left:83.4px;top:398.23px;font-size:8.8px;line-height:11.44px;font-weight:700;color:#16191f;-webkit-text-stroke:0.194px #16191f;transform:scaleX(0.8599);transform-origin:0 50%;">After Rebalance</div>
<div class="b" style="left:68.1px;top:414.09999999999997px;width:181.40px;height:11.50px;background:#f2f5f9;border-radius:2.5px;"></div>
<div class="t" style="left:73.5px;top:416.67px;font-size:6.6px;line-height:8.58px;font-weight:700;color:#16191f;-webkit-text-stroke:0.145px #16191f;transform:scaleX(0.9091);transform-origin:0 50%;">Current Inventory</div>
<div class="b" style="left:255.7px;top:414.09999999999997px;width:326.70px;height:11.50px;background:#f2f5f9;border-radius:2.5px;"></div>
<div class="t" style="left:260.7px;top:416.67px;font-size:6.6px;line-height:8.58px;font-weight:700;color:#16191f;-webkit-text-stroke:0.145px #16191f;transform:scaleX(0.9031);transform-origin:0 50%;">Projected inventory</div>
<div class="t" style="left:73.5px;top:435.91px;font-size:5.8px;line-height:7.54px;font-weight:700;color:#16191f;-webkit-text-stroke:0.128px #16191f;transform:scaleX(0.8693);transform-origin:0 50%;">Location</div>
<div class="t" style="left:165.6px;top:435.91px;font-size:5.8px;line-height:7.54px;font-weight:700;color:#16191f;-webkit-text-stroke:0.128px #16191f;transform:scaleX(0.895);transform-origin:0 50%;">Available</div>
<div class="t" style="left:201.9px;top:435.91px;font-size:5.8px;line-height:7.54px;font-weight:700;color:#16191f;-webkit-text-stroke:0.128px #16191f;transform:scaleX(0.8765);transform-origin:0 50%;">Safety Stock</div>
<div class="t" style="left:265.8px;top:435.91px;font-size:5.8px;line-height:7.54px;font-weight:700;color:#16191f;-webkit-text-stroke:0.128px #16191f;transform:translateX(-50%) scaleX(0.7992);transform-origin:50% 50%;">Today</div>
<div class="t" style="left:294.1px;top:435.91px;font-size:5.8px;line-height:7.54px;font-weight:700;color:#16191f;letter-spacing:0.053px;-webkit-text-stroke:0.128px #16191f;transform:translateX(-50%) scaleX(1);transform-origin:50% 50%;">11/30</div>
<div class="t" style="left:316.47px;top:435.91px;font-size:5.8px;line-height:7.54px;font-weight:700;color:#16191f;letter-spacing:0.001px;-webkit-text-stroke:0.128px #16191f;transform:translateX(-50%) scaleX(1);transform-origin:50% 50%;">12/1</div>
<div class="t" style="left:338.84000000000003px;top:435.91px;font-size:5.8px;line-height:7.54px;font-weight:700;color:#16191f;letter-spacing:0.001px;-webkit-text-stroke:0.128px #16191f;transform:translateX(-50%) scaleX(1);transform-origin:50% 50%;">12/2</div>
<div class="t" style="left:361.21000000000004px;top:435.91px;font-size:5.8px;line-height:7.54px;font-weight:700;color:#16191f;letter-spacing:0.001px;-webkit-text-stroke:0.128px #16191f;transform:translateX(-50%) scaleX(1);transform-origin:50% 50%;">12/3</div>
<div class="t" style="left:383.58000000000004px;top:435.91px;font-size:5.8px;line-height:7.54px;font-weight:700;color:#16191f;letter-spacing:0.001px;-webkit-text-stroke:0.128px #16191f;transform:translateX(-50%) scaleX(1);transform-origin:50% 50%;">12/4</div>
<div class="t" style="left:405.95000000000005px;top:435.91px;font-size:5.8px;line-height:7.54px;font-weight:700;color:#16191f;letter-spacing:0.001px;-webkit-text-stroke:0.128px #16191f;transform:translateX(-50%) scaleX(1);transform-origin:50% 50%;">12/5</div>
<div class="t" style="left:428.32000000000005px;top:435.91px;font-size:5.8px;line-height:7.54px;font-weight:700;color:#16191f;letter-spacing:0.001px;-webkit-text-stroke:0.128px #16191f;transform:translateX(-50%) scaleX(1);transform-origin:50% 50%;">12/6</div>
<div class="t" style="left:455.6px;top:435.91px;font-size:5.8px;line-height:7.54px;font-weight:700;color:#16191f;-webkit-text-stroke:0.128px #16191f;transform:translateX(-50%) scaleX(0.8989);transform-origin:50% 50%;">+2w</div>
<div class="t" style="left:478.0px;top:435.91px;font-size:5.8px;line-height:7.54px;font-weight:700;color:#16191f;-webkit-text-stroke:0.128px #16191f;transform:translateX(-50%) scaleX(0.8989);transform-origin:50% 50%;">+3w</div>
<div class="t" style="left:500.40000000000003px;top:435.91px;font-size:5.8px;line-height:7.54px;font-weight:700;color:#16191f;-webkit-text-stroke:0.128px #16191f;transform:translateX(-50%) scaleX(0.8989);transform-origin:50% 50%;">+4w</div>
<div class="t" style="left:527.7px;top:435.91px;font-size:5.8px;line-height:7.54px;font-weight:700;color:#16191f;-webkit-text-stroke:0.128px #16191f;transform:translateX(-50%) scaleX(0.8839);transform-origin:50% 50%;">+2m</div>
<div class="t" style="left:550.1px;top:435.91px;font-size:5.8px;line-height:7.54px;font-weight:700;color:#16191f;-webkit-text-stroke:0.128px #16191f;transform:translateX(-50%) scaleX(0.8839);transform-origin:50% 50%;">+3m</div>
<div class="t" style="left:572.5px;top:435.91px;font-size:5.8px;line-height:7.54px;font-weight:700;color:#16191f;-webkit-text-stroke:0.128px #16191f;transform:translateX(-50%) scaleX(0.8839);transform-origin:50% 50%;">+4m</div>
<div class="t" style="left:73.6px;top:454.76px;font-size:5.6px;line-height:7.28px;font-weight:700;color:#16191f;-webkit-text-stroke:0.123px #16191f;transform:scaleX(0.9231);transform-origin:0 50%;">Atlanta Distribution Center</div>
<div class="t" style="left:73.6px;top:462.12px;font-size:5.1px;line-height:6.63px;font-weight:400;color:#30363d;-webkit-text-stroke:0.153px #30363d;transform:scaleX(0.9494);transform-origin:0 50%;">ATL1</div>
<div class="t" style="left:165.8px;top:454.99px;font-size:9.4px;line-height:12.22px;font-weight:700;color:#16191f;-webkit-text-stroke:0.207px #16191f;transform:scaleX(0.8565);transform-origin:0 50%;">3,950</div>
<div class="t" style="left:202px;top:454.99px;font-size:9.4px;line-height:12.22px;font-weight:700;color:#16191f;-webkit-text-stroke:0.207px #16191f;transform:scaleX(0.8495);transform-origin:0 50%;">300</div>
<div class="b" style="left:255.7px;top:450.59999999999997px;width:20.15px;height:19.60px;background:#3eb27a;border-radius:2.4px;"></div>
<div class="b" style="left:284.0px;top:450.59999999999997px;width:20.15px;height:19.60px;background:#3eb27a;border-radius:2.4px;"></div>
<div class="b" style="left:306.37px;top:450.59999999999997px;width:20.15px;height:19.60px;background:#3eb27a;border-radius:2.4px;"></div>
<div class="b" style="left:328.74px;top:450.59999999999997px;width:20.15px;height:19.60px;background:#3eb27a;border-radius:2.4px;"></div>
<div class="b" style="left:351.11px;top:450.59999999999997px;width:20.15px;height:19.60px;background:#3eb27a;border-radius:2.4px;"></div>
<div class="b" style="left:373.48px;top:450.59999999999997px;width:20.15px;height:19.60px;background:#3eb27a;border-radius:2.4px;"></div>
<div class="b" style="left:395.85px;top:450.59999999999997px;width:20.15px;height:19.60px;background:#3eb27a;border-radius:2.4px;"></div>
<div class="b" style="left:418.22px;top:450.59999999999997px;width:20.15px;height:19.60px;background:#3eb27a;border-radius:2.4px;"></div>
<div class="b" style="left:445.5px;top:450.59999999999997px;width:20.15px;height:19.60px;background:#3eb27a;border-radius:2.4px;"></div>
<div class="b" style="left:467.9px;top:450.59999999999997px;width:20.15px;height:19.60px;background:#3eb27a;border-radius:2.4px;"></div>
<div class="b" style="left:490.3px;top:450.59999999999997px;width:20.15px;height:19.60px;background:#3eb27a;border-radius:2.4px;"></div>
<div class="b" style="left:517.6px;top:450.59999999999997px;width:20.15px;height:19.60px;background:#3eb27a;border-radius:2.4px;"></div>
<div class="b" style="left:540.0px;top:450.59999999999997px;width:20.15px;height:19.60px;background:#3eb27a;border-radius:2.4px;"></div>
<div class="b" style="left:562.4px;top:450.59999999999997px;width:20.15px;height:19.60px;background:#3eb27a;border-radius:2.4px;"></div>
<div class="t" style="left:73.6px;top:477.56px;font-size:5.6px;line-height:7.28px;font-weight:700;color:#16191f;-webkit-text-stroke:0.123px #16191f;transform:scaleX(0.9188);transform-origin:0 50%;">Alabama Distribution Center</div>
<div class="t" style="left:73.6px;top:483.92px;font-size:5.1px;line-height:6.63px;font-weight:400;color:#30363d;-webkit-text-stroke:0.153px #30363d;transform:scaleX(0.9464);transform-origin:0 50%;">ALB2</div>
<div class="t" style="left:165.8px;top:478.26px;font-size:9.4px;line-height:12.22px;font-weight:700;color:#16191f;-webkit-text-stroke:0.207px #16191f;transform:scaleX(0.8565);transform-origin:0 50%;">4,040</div>
<div class="t" style="left:202px;top:478.26px;font-size:9.4px;line-height:12.22px;font-weight:700;color:#16191f;-webkit-text-stroke:0.207px #16191f;transform:scaleX(0.8495);transform-origin:0 50%;">500</div>
<div class="b" style="left:255.7px;top:473.4px;width:20.15px;height:19.60px;background:#3eb27a;border-radius:2.4px;"></div>
<div class="b" style="left:284.0px;top:473.4px;width:20.15px;height:19.60px;background:#3eb27a;border-radius:2.4px;"></div>
<div class="b" style="left:306.37px;top:473.4px;width:20.15px;height:19.60px;background:#3eb27a;border-radius:2.4px;"></div>
<div class="b" style="left:328.74px;top:473.4px;width:20.15px;height:19.60px;background:#3eb27a;border-radius:2.4px;"></div>
<div class="b" style="left:351.11px;top:473.4px;width:20.15px;height:19.60px;background:#3eb27a;border-radius:2.4px;"></div>
<div class="b" style="left:373.48px;top:473.4px;width:20.15px;height:19.60px;background:#3eb27a;border-radius:2.4px;"></div>
<div class="b" style="left:395.85px;top:473.4px;width:20.15px;height:19.60px;background:#3eb27a;border-radius:2.4px;"></div>
<div class="b" style="left:418.22px;top:473.4px;width:20.15px;height:19.60px;background:#3eb27a;border-radius:2.4px;"></div>
<div class="b" style="left:445.5px;top:473.4px;width:20.15px;height:19.60px;background:#3eb27a;border-radius:2.4px;"></div>
<div class="b" style="left:467.9px;top:473.4px;width:20.15px;height:19.60px;background:#3eb27a;border-radius:2.4px;"></div>
<div class="b" style="left:490.3px;top:473.4px;width:20.15px;height:19.60px;background:#3eb27a;border-radius:2.4px;"></div>
<div class="b" style="left:517.6px;top:473.4px;width:20.15px;height:19.60px;background:#3eb27a;border-radius:2.4px;"></div>
<div class="b" style="left:540.0px;top:473.4px;width:20.15px;height:19.60px;background:#3eb27a;border-radius:2.4px;"></div>
<div class="b" style="left:562.4px;top:473.4px;width:20.15px;height:19.60px;background:#3eb27a;border-radius:2.4px;"></div>
<div class="b" style="left:44.3px;top:509.4px;width:550.00px;height:32.00px;background:#fff;border-radius:3.5px;border:0.8px solid #eef0f3;box-sizing:border-box;"></div>
<svg class="b" style="left:52.40px;top:523.40px;" width="5.6" height="5.6" viewBox="0 0 24 24" fill="none"><path d="M3.5 7.5 L12 16 L20.5 7.5" stroke="#16191f" stroke-width="4.8"/></svg>
<div class="t" style="left:63.8px;top:517.11px;font-size:8.3px;line-height:10.79px;font-weight:700;color:#16191f;-webkit-text-stroke:0.183px #16191f;transform:scaleX(0.8262);transform-origin:0 50%;">Move 3,000 units from Charlotte DC</div>
<div class="t" style="left:64px;top:528.91px;font-size:5.1px;line-height:6.63px;font-weight:400;color:#3b424b;-webkit-text-stroke:0.153px #3b424b;transform:scaleX(1.0709);transform-origin:0 50%;">Arrives in approximately 4 days</div>
<div class="b" style="left:204.7px;top:521.3000000000001px;width:19.40px;height:9.20px;background:#35a873;border-radius:2.4px;"></div>
<div class="t" style="left:214.4px;top:524.42px;font-size:5.4px;line-height:7.02px;font-weight:700;color:#fff;-webkit-text-stroke:0.119px #fff;transform:translateX(-50%) scaleX(0.8034);transform-origin:50% 50%;">CHA1</div>
<svg class="b" style="left:235.50px;top:523.10px;" width="5.6" height="5.6" viewBox="0 0 24 24" fill="none"><path d="M5 1.5 L20 12 L5 22.5 Z" fill="#16191f"/></svg>
<div class="b" style="left:243.4px;top:520.7px;width:31.40px;height:10.40px;background:#fff;border-radius:2.6px;border:0.7px solid #f0f2f4;box-sizing:border-box;"></div>
<div class="t" style="left:247.8px;top:523.15px;font-size:6.2px;line-height:8.06px;font-weight:700;color:#16191f;-webkit-text-stroke:0.136px #16191f;transform:scaleX(0.9005);transform-origin:0 50%;">302</div>
<div class="t" style="left:258.6px;top:524.26px;font-size:5.1px;line-height:6.63px;font-weight:400;color:#737b84;letter-spacing:0.052px;-webkit-text-stroke:0.153px #737b84;">Miles</div>
<svg class="b" style="left:278.50px;top:523.10px;" width="5.6" height="5.6" viewBox="0 0 24 24" fill="none"><path d="M5 1.5 L20 12 L5 22.5 Z" fill="#16191f"/></svg>
<div class="b" style="left:288px;top:521.3000000000001px;width:19.30px;height:9.20px;background:#f0464c;border-radius:2.4px;"></div>
<div class="t" style="left:297.5px;top:524.42px;font-size:5.4px;line-height:7.02px;font-weight:700;color:#fff;-webkit-text-stroke:0.119px #fff;transform:translateX(-50%) scaleX(0.8105);transform-origin:50% 50%;">ATL1</div>
<div class="t" style="left:335px;top:516.12px;font-size:5.1px;line-height:6.63px;font-weight:400;color:#414750;letter-spacing:-0.003px;-webkit-text-stroke:0.153px #414750;">Score</div>
<div class="t" style="left:335px;top:524.22px;font-size:10.8px;line-height:14.04px;font-weight:700;color:#16191f;letter-spacing:-0.016px;-webkit-text-stroke:0.238px #16191f;">75</div>
<div class="t" style="left:386.4px;top:516.12px;font-size:5.1px;line-height:6.63px;font-weight:400;color:#414750;-webkit-text-stroke:0.153px #414750;transform:scaleX(1.0485);transform-origin:0 50%;">Inventory Risk Resolved</div>
<div class="t" style="left:386.4px;top:524.22px;font-size:10.8px;line-height:14.04px;font-weight:700;color:#16191f;letter-spacing:0.088px;-webkit-text-stroke:0.238px #16191f;">80%</div>
<div class="t" style="left:479.9px;top:516.12px;font-size:5.1px;line-height:6.63px;font-weight:400;color:#414750;letter-spacing:0.038px;-webkit-text-stroke:0.153px #414750;">Emissions (CO<span style="font-size:3.6px;vertical-align:-0.8px">2</span>)</div>
<div class="t" style="left:479.9px;top:524.22px;font-size:10.8px;line-height:14.04px;font-weight:700;color:#16191f;letter-spacing:-0.105px;-webkit-text-stroke:0.238px #16191f;">63.7</div>
<div class="t" style="left:503.4px;top:525.16px;font-size:5.4px;line-height:7.02px;font-weight:700;color:#16191f;-webkit-text-stroke:0.119px #16191f;transform:scaleX(0.8417);transform-origin:0 50%;">kg</div>
<div class="b" style="left:552.1px;top:517.5px;width:33.90px;height:16.80px;background:#115080;border-radius:3px;"></div>
<div class="t" style="left:568.6px;top:522.91px;font-size:6.5px;line-height:8.45px;font-weight:700;color:#fff;-webkit-text-stroke:0.143px #fff;transform:translateX(-50%) scaleX(0.8927);transform-origin:50% 50%;">Select</div>
<div class="b" style="left:44.3px;top:547.6px;width:550.00px;height:32.70px;background:#fff;border-radius:3.5px;border:0.8px solid #eef0f3;box-sizing:border-box;"></div>
<svg class="b" style="left:52.40px;top:561.80px;" width="5.6" height="5.6" viewBox="0 0 24 24" fill="none"><path d="M3.5 7.5 L12 16 L20.5 7.5" stroke="#16191f" stroke-width="4.8"/></svg>
<div class="t" style="left:63.8px;top:555.50px;font-size:8.3px;line-height:10.79px;font-weight:700;color:#16191f;-webkit-text-stroke:0.183px #16191f;transform:scaleX(0.8204);transform-origin:0 50%;">Move 3,000 units from Nashville DC</div>
<div class="t" style="left:64px;top:567.14px;font-size:5.1px;line-height:6.63px;font-weight:400;color:#3b424b;-webkit-text-stroke:0.153px #3b424b;transform:scaleX(1.0709);transform-origin:0 50%;">Arrives in approximately 4 days</div>
<div class="b" style="left:204.7px;top:559.7px;width:19.40px;height:9.20px;background:#35a873;border-radius:2.4px;"></div>
<div class="t" style="left:214.4px;top:562.22px;font-size:5.4px;line-height:7.02px;font-weight:700;color:#fff;-webkit-text-stroke:0.119px #fff;transform:translateX(-50%) scaleX(0.82);transform-origin:50% 50%;">NAS1</div>
<svg class="b" style="left:235.50px;top:561.50px;" width="5.6" height="5.6" viewBox="0 0 24 24" fill="none"><path d="M5 1.5 L20 12 L5 22.5 Z" fill="#16191f"/></svg>
<div class="b" style="left:243.4px;top:559.1px;width:31.40px;height:10.40px;background:#fff;border-radius:2.6px;border:0.7px solid #f0f2f4;box-sizing:border-box;"></div>
<div class="t" style="left:247.8px;top:561.95px;font-size:6.2px;line-height:8.06px;font-weight:700;color:#16191f;-webkit-text-stroke:0.136px #16191f;transform:scaleX(0.9005);transform-origin:0 50%;">248</div>
<div class="t" style="left:258.6px;top:563.06px;font-size:5.1px;line-height:6.63px;font-weight:400;color:#737b84;letter-spacing:0.052px;-webkit-text-stroke:0.153px #737b84;">Miles</div>
<svg class="b" style="left:278.50px;top:561.50px;" width="5.6" height="5.6" viewBox="0 0 24 24" fill="none"><path d="M5 1.5 L20 12 L5 22.5 Z" fill="#16191f"/></svg>
<div class="b" style="left:288px;top:559.7px;width:19.30px;height:9.20px;background:#f0464c;border-radius:2.4px;"></div>
<div class="t" style="left:297.5px;top:562.22px;font-size:5.4px;line-height:7.02px;font-weight:700;color:#fff;-webkit-text-stroke:0.119px #fff;transform:translateX(-50%) scaleX(0.8105);transform-origin:50% 50%;">ATL1</div>
<div class="t" style="left:335px;top:554.91px;font-size:5.1px;line-height:6.63px;font-weight:400;color:#414750;letter-spacing:-0.003px;-webkit-text-stroke:0.153px #414750;">Score</div>
<div class="t" style="left:335px;top:562.65px;font-size:10.8px;line-height:14.04px;font-weight:700;color:#16191f;letter-spacing:-0.016px;-webkit-text-stroke:0.238px #16191f;">60</div>
<div class="t" style="left:386.4px;top:554.91px;font-size:5.1px;line-height:6.63px;font-weight:400;color:#414750;-webkit-text-stroke:0.153px #414750;transform:scaleX(1.0485);transform-origin:0 50%;">Inventory Risk Resolved</div>
<div class="t" style="left:386.4px;top:562.65px;font-size:10.8px;line-height:14.04px;font-weight:700;color:#16191f;letter-spacing:0.088px;-webkit-text-stroke:0.238px #16191f;">60%</div>
<div class="t" style="left:479.9px;top:554.91px;font-size:5.1px;line-height:6.63px;font-weight:400;color:#414750;letter-spacing:0.038px;-webkit-text-stroke:0.153px #414750;">Emissions (CO<span style="font-size:3.6px;vertical-align:-0.8px">2</span>)</div>
<div class="t" style="left:479.9px;top:562.65px;font-size:10.8px;line-height:14.04px;font-weight:700;color:#16191f;letter-spacing:-0.105px;-webkit-text-stroke:0.238px #16191f;">52.4</div>
<div class="t" style="left:503.4px;top:562.96px;font-size:5.4px;line-height:7.02px;font-weight:700;color:#16191f;-webkit-text-stroke:0.119px #16191f;transform:scaleX(0.8417);transform-origin:0 50%;">kg</div>
<div class="b" style="left:552.1px;top:555.9px;width:33.90px;height:16.80px;background:#115080;border-radius:3px;"></div>
<div class="t" style="left:568.6px;top:561.71px;font-size:6.5px;line-height:8.45px;font-weight:700;color:#fff;-webkit-text-stroke:0.143px #fff;transform:translateX(-50%) scaleX(0.8927);transform-origin:50% 50%;">Select</div>
</div></body></html>
